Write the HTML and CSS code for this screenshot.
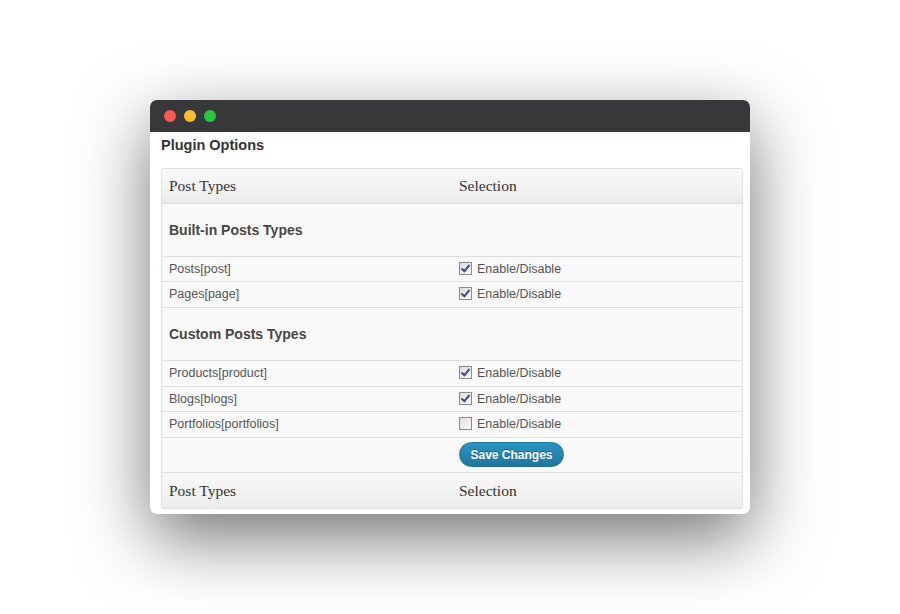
FILE: index.html
```html
<!DOCTYPE html>
<html lang="en">
<head>
  <meta charset="UTF-8">
  <title>Plugin Options</title>
  <link rel="stylesheet" href="styles.css">
</head>
<body>
  <div class="window">
    <div class="titlebar">
      <span class="dot red"></span>
      <span class="dot yellow"></span>
      <span class="dot green"></span>
    </div>
    <div class="content">
      <h2 class="page-title">Plugin Options</h2>
      <table class="options">
        <thead>
          <tr>
            <th class="col-type">Post Types</th>
            <th>Selection</th>
          </tr>
        </thead>
        <tbody>
          <tr class="section">
            <td colspan="2">Built-in Posts Types</td>
          </tr>
          <tr>
            <td>Posts[post]</td>
            <td><span class="check on"></span>Enable/Disable</td>
          </tr>
          <tr>
            <td>Pages[page]</td>
            <td><span class="check on"></span>Enable/Disable</td>
          </tr>
          <tr class="section">
            <td colspan="2">Custom Posts Types</td>
          </tr>
          <tr>
            <td>Products[product]</td>
            <td><span class="check on"></span>Enable/Disable</td>
          </tr>
          <tr>
            <td>Blogs[blogs]</td>
            <td><span class="check on"></span>Enable/Disable</td>
          </tr>
          <tr>
            <td>Portfolios[portfolios]</td>
            <td><span class="check"></span>Enable/Disable</td>
          </tr>
          <tr class="actions">
            <td></td>
            <td><button class="save">Save Changes</button></td>
          </tr>
        </tbody>
        <tfoot>
          <tr>
            <th>Post Types</th>
            <th>Selection</th>
          </tr>
        </tfoot>
      </table>
    </div>
  </div>
</body>
</html>
```

FILE: styles.css
```css
html, body {
  margin: 0;
  height: 100%;
}
body {
  display: flex;
  justify-content: center;
  align-items: center;
  background: #fff;
  font-family: "Liberation Sans", Arial, sans-serif;
}
.window {
  width: 600px;
  background: #fff;
  border-radius: 7px;
  box-shadow: 0 24px 70px rgba(0,0,0,0.55);
  overflow: hidden;
}
.titlebar {
  height: 32px;
  background: #373839;
  display: flex;
  align-items: center;
  gap: 8px;
  padding-left: 14px;
}
.dot {
  width: 12px;
  height: 12px;
  border-radius: 50%;
  display: block;
}
.dot.red { background: #fc5753; }
.dot.yellow { background: #fdbc2e; }
.dot.green { background: #2ac840; }
.content {
  padding: 4px 7px 5px 11px;
}
.page-title {
  margin: 0 0 14px 0;
  font-size: 14.5px;
  line-height: 18px;
  font-weight: bold;
  color: #333;
}
.options {
  width: 100%;
  border-collapse: separate;
  border-spacing: 0;
  border: 1px solid #dfdfdf;
  border-radius: 3px;
  background: #f9f9f9;
}
.options th {
  text-align: left;
  font-family: "Liberation Serif", Georgia, serif;
  font-weight: normal;
  font-size: 15.5px;
  color: #333;
  height: 34px;
  padding: 0 7px;
  background: linear-gradient(#f9f9f9, #ececec);
}
.options thead th {
  border-bottom: 1px solid #dfdfdf;
}
.options tfoot th {
  height: 35px;
  border-top: 1px solid #dfdfdf;
}
.options .col-type {
  width: 276px;
}
.options td {
  font-size: 12.5px;
  line-height: 16px;
  color: #555;
  padding: 4px 7px 4.5px 7px;
  border-top: 1px solid #dfdfdf;
  vertical-align: middle;
}
.options tbody tr:first-child td {
  border-top: none;
}
.options .section td {
  height: 43px;
  padding-top: 5px;
  font-size: 14px;
  font-weight: bold;
  color: #464646;
}
.options tbody tr.section:first-child td {
  padding-top: 4px;
}
.check {
  display: inline-block;
  width: 11px;
  height: 11px;
  border: 1px solid #8a8a8a;
  background: linear-gradient(135deg, #dcdcdc, #fdfdfd);
  vertical-align: -2px;
  margin: 0 5px 0 0;
  position: relative;
}
.check.on::after {
  content: "";
  position: absolute;
  left: 3px;
  top: 0px;
  width: 3px;
  height: 7px;
  border: solid #3c4f8c;
  border-width: 0 2px 2px 0;
  transform: rotate(40deg);
}
.options .actions td {
  height: 26px;
}
.save {
  width: 105px;
  height: 25px;
  padding: 0;
  border: 1px solid #21759b;
  border-radius: 13px;
  background: linear-gradient(#2a95c5, #21759b);
  color: #fff;
  font-family: "Liberation Sans", Arial, sans-serif;
  font-size: 12px;
  font-weight: bold;
  text-shadow: 0 -1px 0 rgba(0,0,0,0.3);
  margin-left: 0;
}
```
